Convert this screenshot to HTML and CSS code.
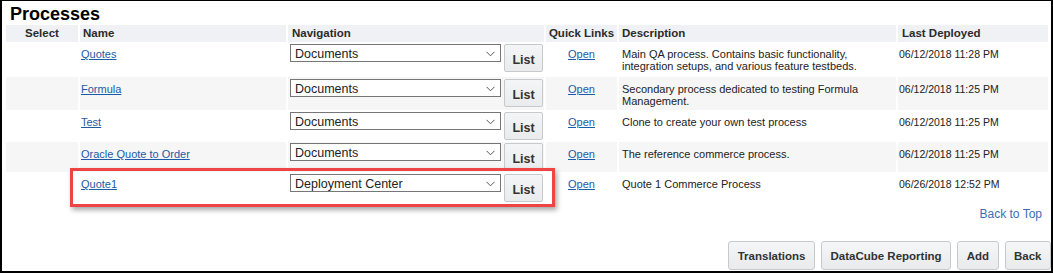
FILE: index.html
```html
<!DOCTYPE html>
<html>
<head>
<meta charset="utf-8">
<link rel="stylesheet" href="styles.css">
</head>
<body>
<div class="page">
  <h1 class="title">Processes</h1>
  <table class="grid">
    <colgroup>
      <col class="c-select"><col class="c-name"><col class="c-nav"><col class="c-quick"><col class="c-desc"><col class="c-date">
    </colgroup>
    <thead>
      <tr>
        <th class="h-center">Select</th>
        <th>Name</th>
        <th class="h-nav">Navigation</th>
        <th class="h-center">Quick Links</th>
        <th>Description</th>
        <th class="h-date">Last Deployed</th>
      </tr>
    </thead>
    <tbody>
      <tr>
        <td></td>
        <td class="name"><a href="#">Quotes</a></td>
        <td class="navcell"><div class="nav"><span class="sel"><select><option>Documents</option></select><svg class="chev" width="9" height="6" viewBox="0 0 9 6"><path d="M0.5 0.8 L4.5 4.8 L8.5 0.8" fill="none" stroke="#555" stroke-width="1"/></svg></span><button class="list">List</button></div></td>
        <td class="quick"><a href="#">Open</a></td>
        <td class="desc">Main QA process. Contains basic functionality, integration setups, and various feature testbeds.</td>
        <td class="date">06/12/2018 11:28 PM</td>
      </tr>
      <tr>
        <td></td>
        <td class="name"><a href="#">Formula</a></td>
        <td class="navcell"><div class="nav"><span class="sel"><select><option>Documents</option></select><svg class="chev" width="9" height="6" viewBox="0 0 9 6"><path d="M0.5 0.8 L4.5 4.8 L8.5 0.8" fill="none" stroke="#555" stroke-width="1"/></svg></span><button class="list">List</button></div></td>
        <td class="quick"><a href="#">Open</a></td>
        <td class="desc">Secondary process dedicated to testing Formula Management.</td>
        <td class="date">06/12/2018 11:25 PM</td>
      </tr>
      <tr>
        <td></td>
        <td class="name"><a href="#">Test</a></td>
        <td class="navcell"><div class="nav"><span class="sel"><select><option>Documents</option></select><svg class="chev" width="9" height="6" viewBox="0 0 9 6"><path d="M0.5 0.8 L4.5 4.8 L8.5 0.8" fill="none" stroke="#555" stroke-width="1"/></svg></span><button class="list">List</button></div></td>
        <td class="quick"><a href="#">Open</a></td>
        <td class="desc">Clone to create your own test process</td>
        <td class="date">06/12/2018 11:25 PM</td>
      </tr>
      <tr>
        <td></td>
        <td class="name"><a href="#">Oracle Quote to Order</a></td>
        <td class="navcell"><div class="nav"><span class="sel"><select><option>Documents</option></select><svg class="chev" width="9" height="6" viewBox="0 0 9 6"><path d="M0.5 0.8 L4.5 4.8 L8.5 0.8" fill="none" stroke="#555" stroke-width="1"/></svg></span><button class="list">List</button></div></td>
        <td class="quick"><a href="#">Open</a></td>
        <td class="desc">The reference commerce process.</td>
        <td class="date">06/12/2018 11:25 PM</td>
      </tr>
      <tr>
        <td></td>
        <td class="name"><a href="#">Quote1</a></td>
        <td class="navcell"><div class="nav"><span class="sel"><select><option>Deployment Center</option></select><svg class="chev" width="9" height="6" viewBox="0 0 9 6"><path d="M0.5 0.8 L4.5 4.8 L8.5 0.8" fill="none" stroke="#555" stroke-width="1"/></svg></span><button class="list">List</button></div></td>
        <td class="quick"><a href="#">Open</a></td>
        <td class="desc">Quote 1 Commerce Process</td>
        <td class="date">06/26/2018 12:52 PM</td>
      </tr>
    </tbody>
  </table>
  <div class="back-top"><a href="#">Back to Top</a></div>
  <div class="actions">
    <button class="btn">Translations</button>
    <button class="btn">DataCube Reporting</button>
    <button class="btn">Add</button>
    <button class="btn">Back</button>
  </div>
  <div class="highlight"></div>
</div>
</body>
</html>
```

FILE: styles.css
```css
html, body {
  margin: 0;
  padding: 0;
  background: #fff;
}

.page {
  position: relative;
  box-sizing: border-box;
  width: 1053px;
  height: 273px;
  border-style: solid;
  border-color: #000;
  border-width: 1px 2px 2px 2px;
  padding: 0 0 1px 2px;
  display: flex;
  flex-direction: column;
  font-family: "Liberation Sans", Arial, sans-serif;
  color: #222;
  overflow: hidden;
}

.title {
  margin: 0 0 0 6px;
  padding-top: 2px;
  height: 22px;
  font-size: 18px;
  line-height: 22px;
  font-weight: bold;
  color: #000;
}

.grid {
  border-collapse: separate;
  border-spacing: 2px 0;
  table-layout: fixed;
  width: 1046px;
}

.c-select { width: 72px; }
.c-name { width: 206px; }
.c-nav { width: 256px; }
.c-quick { width: 71px; }
.c-desc { width: 277px; }
.c-date { width: 150px; }

.grid th {
  background: #eff1f5;
  height: 17px;
  padding: 0 0 0 3px;
  font-size: 11.5px;
  line-height: 17px;
  font-weight: bold;
  color: #2b2b2b;
  text-align: left;
  vertical-align: middle;
  white-space: nowrap;
}

.grid th.h-center {
  text-align: center;
  padding: 0;
}

.grid th.h-nav { padding-left: 4px; }
.grid th.h-date { padding-left: 4px; }

.grid td {
  vertical-align: top;
  padding: 6px 0 0 0;
  font-size: 11px;
  line-height: 12px;
}

.grid tbody tr:nth-child(even) td {
  background: #f6f6f6;
}

.grid tbody tr:nth-child(1) { height: 35px; }
.grid tbody tr:nth-child(2) { height: 33px; }
.grid tbody tr:nth-child(3) { height: 32px; }
.grid tbody tr:nth-child(4) { height: 30px; }
.grid tbody tr:nth-child(5) { height: 34px; }

.grid td.name { padding-left: 1px; }
.grid td.desc { padding-left: 3px; padding-right: 4px; }
.grid td.date { padding-left: 1px; font-size: 10.5px; white-space: nowrap; }
.grid td.quick { text-align: center; }

.grid td.navcell {
  padding: 2px 0 0 2px;
}

.grid tbody tr:nth-child(4) td.navcell { padding-top: 1px; }

a {
  color: #1d5aa6;
  text-decoration: underline;
}

.nav {
  display: flex;
  align-items: flex-start;
  gap: 3px;
}

.sel {
  position: relative;
  display: block;
  width: 211px;
  height: 18px;
}

.sel select {
  appearance: none;
  -webkit-appearance: none;
  box-sizing: border-box;
  width: 211px;
  height: 18px;
  margin: 0;
  padding: 2px 20px 0 4px;
  border: 1px solid #767676;
  border-radius: 0;
  background: #fff;
  font-family: "Liberation Sans", Arial, sans-serif;
  font-size: 12.5px;
  line-height: 14px;
  color: #222;
}

.chev {
  position: absolute;
  right: 6px;
  top: 7px;
  pointer-events: none;
}

.list {
  box-sizing: border-box;
  width: 39px;
  height: 28px;
  margin: 0;
  padding: 3px 0 0 0;
  border: 1px solid #c6cacd;
  border-radius: 2px;
  background: linear-gradient(#f4f5f6, #e9ebed);
  font-family: "Liberation Sans", Arial, sans-serif;
  font-size: 12.5px;
  font-weight: bold;
  color: #333;
}

.back-top {
  text-align: right;
  padding-right: 9px;
  padding-top: 1px;
  font-size: 12px;
  line-height: 14px;
}

.back-top a {
  color: #3a6fb5;
  text-decoration: none;
}

.actions {
  margin-top: auto;
  display: flex;
  justify-content: flex-end;
  gap: 6px;
}

.btn {
  box-sizing: border-box;
  height: 29px;
  margin: 0;
  padding: 0 8.5px;
  border: 1px solid #c6cacd;
  border-radius: 3px;
  background: linear-gradient(#f5f6f7, #e8eaec);
  font-family: "Liberation Sans", Arial, sans-serif;
  font-size: 11.5px;
  font-weight: bold;
  color: #333;
}

.highlight {
  position: absolute;
  left: 68px;
  top: 167px;
  width: 479px;
  height: 33px;
  border: 3px solid #ef4444;
  box-shadow: 2px 3px 5px rgba(0, 0, 0, 0.35);
  pointer-events: none;
}
```
